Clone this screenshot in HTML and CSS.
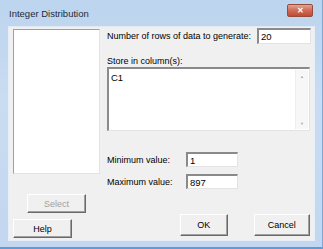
FILE: index.html
```html
<!DOCTYPE html>
<html lang="en">
<head>
    <title>Integer Distribution</title>
    <link rel="stylesheet" href="styles.css">
</head>
<body>
    <div class="window">
        <div class="titlebar">
            <span class="title">Integer Distribution</span>
            <span class="close-btn">&#x2715;</span>
        </div>
        <div class="client">
            <div class="left-col">
                <div class="listbox"></div>
                <button class="btn select-btn" disabled>Select</button>
                <button class="btn help-btn">Help</button>
            </div>
            <div class="right-col">
                <div class="row rows-row">
                    <span class="label">Number of rows of data to generate:</span>
                    <div class="field rows-field">20</div>
                </div>
                <div class="label store-label">Store in column(s):</div>
                <div class="textarea">
                    <div class="text-content">C1</div>
                    <div class="scrollbar">
                        <span class="arrow">&#9650;</span>
                        <span class="arrow">&#9660;</span>
                    </div>
                </div>
                <div class="row value-row min-row">
                    <span class="label value-label">Minimum value:</span>
                    <div class="field value-field">1</div>
                </div>
                <div class="row value-row">
                    <span class="label value-label">Maximum value:</span>
                    <div class="field value-field">897</div>
                </div>
                <div class="buttons">
                    <button class="btn ok-btn">OK</button>
                    <button class="btn cancel-btn">Cancel</button>
                </div>
            </div>
        </div>
    </div>
</body>
</html>
```

FILE: styles.css
```css
body {
    margin: 0;
    font-family: 'Liberation Sans', Arial, sans-serif;
    font-size: 9px;
    color: #000;
}

.window {
    width: 323px;
    height: 249px;
    box-sizing: border-box;
    padding: 0 7px 6px 8px;
    background: linear-gradient(to bottom, #bcd4ee 0%, #c9dcf1 40%, #c2d7ef 100%);
    border-right: 1px solid #7ea6d2;
    border-bottom: 2px solid #5f9bd6;
    display: flex;
    flex-direction: column;
}

.titlebar {
    height: 27px;
    display: flex;
    align-items: center;
    justify-content: space-between;
}

.title {
    font-size: 9.5px;
    color: #1e2a3a;
    margin-left: 1px;
}

.close-btn {
    width: 24px;
    height: 11px;
    margin-top: -7px;
    margin-right: 2px;
    background: linear-gradient(to bottom, #e2a494 0%, #cf6a55 50%, #c04a34 100%);
    border: 1px solid #9a4a3c;
    border-radius: 2px;
    color: #fff;
    font-size: 8px;
    font-weight: bold;
    line-height: 11px;
    text-align: center;
}

.client {
    flex: 1;
    background-color: #f0f0f0;
    display: flex;
    border: 1px solid #e8eef6;
    border-top-color: #dfe8f3;
    margin-top: -1px;
}

.left-col {
    flex-shrink: 0;
    width: 98px;
    padding-left: 4px;
    box-sizing: border-box;
    display: flex;
    flex-direction: column;
    align-items: flex-start;
}

.listbox {
    width: 87px;
    height: 145px;
    margin-top: 2px;
    box-sizing: border-box;
    background-color: #fff;
    border: 1px solid #e3e3e3;
    border-top-color: #a0a0a0;
    border-left-color: #a0a0a0;
}

.btn {
    font-family: inherit;
    font-size: 9px;
    color: #000;
    background-color: #f0f0f0;
    box-sizing: border-box;
    border: 1px solid #fff;
    border-right-color: #696969;
    border-bottom-color: #696969;
    box-shadow: inset -1px -1px 0 #a0a0a0;
    padding: 0;
}

.select-btn {
    width: 59px;
    height: 19px;
    margin-top: 20px;
    margin-left: 14px;
    color: #a0a0a0;
}

.help-btn {
    width: 59px;
    height: 19px;
    margin-top: 6px;
}

.right-col {
    flex: 1;
    min-width: 0;
    padding-right: 4px;
    display: flex;
    flex-direction: column;
}

.row {
    display: flex;
    align-items: center;
}

.rows-row {
    margin-top: 1px;
    justify-content: space-between;
}

.field {
    height: 16px;
    box-sizing: border-box;
    background-color: #fff;
    border: 1px solid #e3e3e3;
    border-top: 2px solid #8a8a8a;
    border-left: 2px solid #8a8a8a;
    padding-left: 2px;
    line-height: 13px;
    font-size: 9.5px;
}

.rows-field {
    width: 54px;
    margin-right: -1px;
}

.store-label {
    margin-top: 12px;
    height: 10px;
    line-height: 10px;
}

.textarea {
    width: 203px;
    height: 64px;
    margin-top: 1px;
    box-sizing: border-box;
    background-color: #fff;
    border: 1px solid #e3e3e3;
    border-top: 2px solid #8a8a8a;
    border-left: 2px solid #8a8a8a;
    display: flex;
}

.text-content {
    flex: 1;
    padding: 3px 0 0 2px;
    font-size: 9.5px;
}

.scrollbar {
    width: 12px;
    margin: 1px 1px 1px 0;
    background-color: #f7f7f7;
    border-left: 1px solid #ededed;
    display: flex;
    flex-direction: column;
    justify-content: space-between;
    align-items: center;
    padding: 4px 0 3px;
}

.arrow {
    font-size: 4px;
    color: #a8a8a8;
}

.min-row {
    margin-top: 21px;
}

.value-row + .value-row {
    margin-top: 7px;
}

.value-label {
    width: 79px;
}

.value-field {
    width: 52px;
    height: 15px;
}

.buttons {
    margin-top: auto;
    margin-bottom: 4px;
    display: flex;
    padding-left: 73px;
}

.ok-btn {
    width: 49px;
    height: 22px;
}

.cancel-btn {
    width: 58px;
    height: 22px;
    margin-left: 26px;
}
```
